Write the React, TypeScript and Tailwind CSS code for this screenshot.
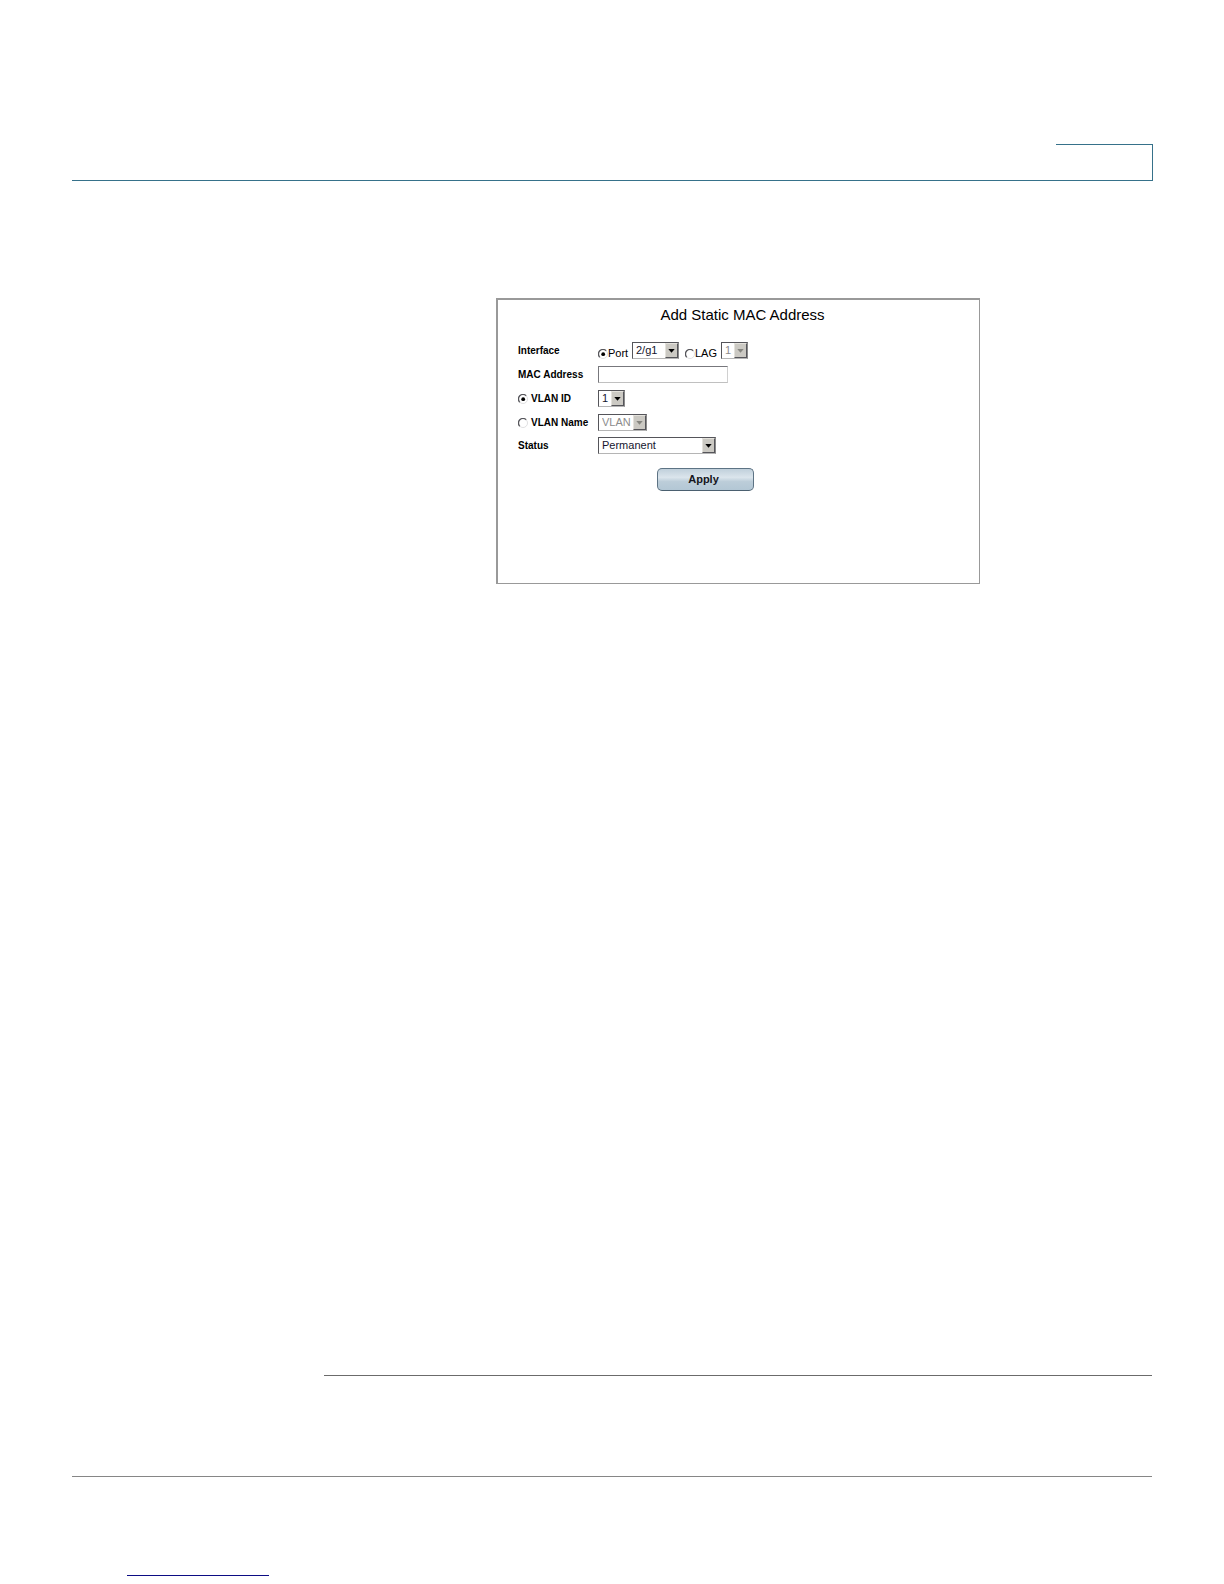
import React, { useState } from 'react';
import clsx from 'clsx';

type RadioProps = {
  id: string;
  name: string;
  checked: boolean;
  onSelect: () => void;
};

const Radio = ({ id, name, checked, onSelect }: RadioProps) => (
  <span className="grid size-[10px] shrink-0">
    <input
      id={id}
      type="radio"
      name={name}
      checked={checked}
      onChange={onSelect}
      className="col-start-1 row-start-1 size-[10px] appearance-none rounded-full bg-white"
    />
    <svg
      viewBox="0 0 10 10"
      className="pointer-events-none col-start-1 row-start-1 size-[10px]"
      aria-hidden="true"
    >
      <path d="M8.2 1.8A4.3 4.3 0 1 0 1.8 8.2" fill="none" stroke="#55555a" strokeWidth="1.3" />
      <path d="M1.8 8.2A4.3 4.3 0 0 0 8.2 1.8" fill="none" stroke="#dcdcde" strokeWidth="0.9" />
      {checked && <circle cx="5.2" cy="5.2" r="1.9" fill="#000" />}
    </svg>
  </span>
);

type SelectProps = {
  id?: string;
  label?: string;
  options: string[];
  disabled?: boolean;
  className?: string;
};

const Select = ({ id, label, options, disabled, className }: SelectProps) => (
  <span className={clsx('grid h-[17px]', className)}>
    <select
      id={id}
      aria-label={label}
      disabled={disabled}
      className="col-start-1 row-start-1 h-[17px] w-full appearance-none border border-t-[#55555a] border-r-[#8a8a8a] border-b-[#b5b5b5] border-l-[#55555a] bg-white pl-[3px] text-[11px] leading-[15px] text-[#15152e] opacity-100 disabled:text-[#8c8c8c]"
    >
      {options.map((option) => (
        <option key={option}>{option}</option>
      ))}
    </select>
    <span className="pointer-events-none col-start-1 row-start-1 m-px flex h-[15px] w-[13px] items-center justify-center justify-self-end border border-t-[#e4e2dc] border-r-[#55555a] border-b-[#55555a] border-l-[#e4e2dc] bg-[#cbc9c3]">
      <svg viewBox="0 0 7 4" className="h-1 w-[7px]" aria-hidden="true">
        <path d="M0.3 0h6.4L3.5 3.8z" fill={disabled ? '#85857f' : '#000'} />
      </svg>
    </span>
  </span>
);

const AddStaticMacForm = () => {
  const [iface, setIface] = useState('port');
  const [vlan, setVlan] = useState('id');

  return (
    <form
      onSubmit={(e) => e.preventDefault()}
      className="min-h-[286px] w-full max-w-[484px] border border-t-2 border-l-2 border-[#999999] pt-[6px] pr-3 pl-5"
    >
      <h1 className="text-center text-[15px] leading-[18px]">Add Static MAC Address</h1>

      <div className="mt-[18px] flex flex-col gap-[6px]">
        <div className="flex h-[18px]">
          <span className="w-20 text-[10px] leading-[18px] font-bold">Interface</span>
          <div className="flex items-end">
            <span className="pb-px">
              <Radio
                id="iface-port"
                name="interface"
                checked={iface === 'port'}
                onSelect={() => setIface('port')}
              />
            </span>
            <label htmlFor="iface-port" className="w-6 text-[11px] leading-[14px]">
              Port
            </label>
            <Select
              label="Port"
              options={['2/g1']}
              disabled={iface !== 'port'}
              className="mr-[6px] w-[47px] self-start"
            />
            <span className="pb-px">
              <Radio
                id="iface-lag"
                name="interface"
                checked={iface === 'lag'}
                onSelect={() => setIface('lag')}
              />
            </span>
            <label htmlFor="iface-lag" className="w-[26px] text-[11px] leading-[14px]">
              LAG
            </label>
            <Select
              label="LAG"
              options={['1']}
              disabled={iface !== 'lag'}
              className="w-[27px] self-start"
            />
          </div>
        </div>

        <div className="flex h-[18px]">
          <label htmlFor="mac" className="w-20 text-[10px] leading-[18px] font-bold">
            MAC Address
          </label>
          <input
            id="mac"
            type="text"
            className="h-[17px] w-[130px] border border-t-[#77777c] border-r-[#d0d0d0] border-b-[#c0c0c0] border-l-[#77777c] px-1 text-[11px]"
          />
        </div>

        <div className="flex h-[18px]">
          <div className="flex h-[17px] w-20 items-center gap-[3px]">
            <Radio id="vlan-id" name="vlan" checked={vlan === 'id'} onSelect={() => setVlan('id')} />
            <label htmlFor="vlan-id" className="text-[10px] leading-[17px] font-bold">
              VLAN ID
            </label>
          </div>
          <Select label="VLAN ID" options={['1']} disabled={vlan !== 'id'} className="w-[27px]" />
        </div>

        <div className="flex h-[17px]">
          <div className="flex h-[17px] w-20 items-center gap-[3px]">
            <Radio
              id="vlan-name"
              name="vlan"
              checked={vlan === 'name'}
              onSelect={() => setVlan('name')}
            />
            <label htmlFor="vlan-name" className="text-[10px] leading-[17px] font-bold">
              VLAN Name
            </label>
          </div>
          <Select
            label="VLAN Name"
            options={['VLAN']}
            disabled={vlan !== 'name'}
            className="w-[49px]"
          />
        </div>

        <div className="flex h-[17px]">
          <label htmlFor="status" className="w-20 text-[10px] leading-[17px] font-bold">
            Status
          </label>
          <Select id="status" options={['Permanent']} className="w-[118px]" />
        </div>
      </div>

      <div className="mt-3 pl-[139px]">
        <button
          type="submit"
          className="h-[23px] w-[97px] rounded-[5px] border border-[#5d7384] border-b-[#4b6070] bg-[linear-gradient(to_bottom,#c0d0db_0%,#dbe5ec_40%,#bccdd9_60%,#b3c7d5_100%)] pr-1 text-[11px] leading-[20px] font-bold text-[#15151c]"
        >
          Apply
        </button>
      </div>
    </form>
  );
};

const App = () => {
  return (
    <div className="flex min-h-screen flex-col bg-white pt-36 pr-[71px] pl-[72px] font-['Liberation_Sans',Arial,sans-serif] text-black">
      <header className="flex justify-end border-b border-[#36718a]">
        <div className="h-9 w-[97px] border-t border-r border-[#36718a]"></div>
      </header>

      <main className="flex-1 pt-[117px] pl-[424px]">
        <AddStaticMacForm />
      </main>

      <footer className="pr-px">
        <div className="ml-[252px] border-t border-[#6b6b6b]"></div>
        <div className="mt-[100px] border-t border-[#868686]"></div>
        <div className="mt-[98px] mb-2 ml-[55px] w-[142px] border-t border-[#0c0c84]"></div>
      </footer>
    </div>
  );
};

export default App;
